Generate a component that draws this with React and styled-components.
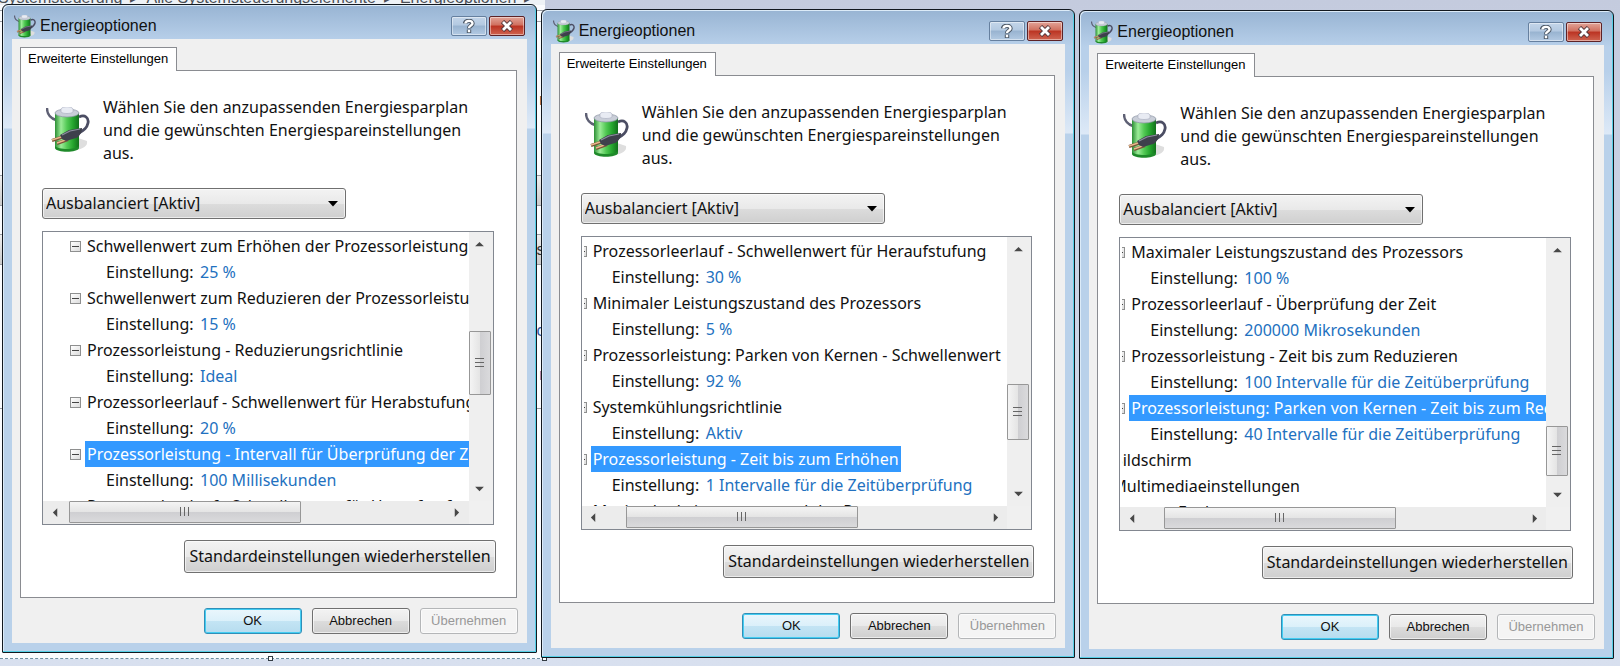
import React, { useId } from "react";
import styled, { createGlobalStyle, css } from "styled-components";

const GlobalStyle = createGlobalStyle`
  *, *::before, *::after { box-sizing: border-box; }
  body { margin: 0; }
`;

const uiFont = `"Noto Sans", "Open Sans", sans-serif`;
const classicFont = `"Liberation Sans", Arial, sans-serif`;

const Desktop = styled.main`
  position: relative;
  min-height: 100vh;
  overflow: hidden;
  padding: 0 6px 7px 2px;
  background: linear-gradient(#c4cbde, #cdd6e8 50%, #d8e0ef);
  font-family: ${uiFont};
  color: #111;
`;

const Windows = styled.div`
  position: relative;
  display: grid;
  grid-template-columns: repeat(3, minmax(0, 1fr));
  align-items: start;
  gap: 4px;
`;

/* Explorer window that shows behind the dialogs */
const Backdrop = styled.div`
  position: absolute;
  left: 0;
  top: 0;
  bottom: 7px;
  width: calc(33.3% + 6px);
  background: #fbfcfe;
  border-bottom: 1px dashed #6f8ea0;
`;

const Breadcrumb = styled.nav`
  display: flex;
  gap: 8px;
  height: 14px;
  margin-top: -9px;
  padding-right: 13px;
  align-items: flex-end;
  justify-content: flex-end;
  font: 16px/14px ${classicFont};
  white-space: nowrap;
  color: #4a4f57;
  background: #eef2f6;
`;

const Sliver = styled.div`
  height: ${(p) => p.$h}px;
  padding-right: 1px;
  text-align: right;
  font: ${(p) => (p.$bold ? "bold" : "normal")} 16px/${(p) => p.$h}px ${classicFont};
  color: ${(p) => p.$color || "#333"};
  background: ${(p) => p.$bg || "transparent"};
  border-bottom: ${(p) => (p.$line ? "1px solid #9a9da3" : "0")};
`;

const Handle = styled.i`
  position: absolute;
  bottom: -3px;
  left: ${(p) => p.$left};
  width: 5px;
  height: 5px;
  border: 1px solid #333c44;
  background: #fff;
`;

const Frame = styled.section`
  margin-top: ${(p) => p.$top}px;
  padding: 0 9px 9px;
  border: 1px solid #12181f;
  border-radius: 6px 6px 1px 1px;
  background: linear-gradient(#98b4d3 0, #b8d0ea 36px, #b8d0ea 60px, #dde9f7 123px, #b9d1ea 124px);
  box-shadow: inset -1px -1px #55cfe6, inset 1px 1px #dcebf8;
`;

const TitleBar = styled.header`
  display: flex;
  align-items: center;
  gap: 2px;
  height: 34px;
  padding: 8px 2px 0;
`;

const Title = styled.h1`
  flex: 1;
  margin: 0 0 0 2px;
  font: normal 16px/20px ${classicFont};
`;

const CaptionButton = styled.button`
  display: grid;
  place-items: center;
  width: 36px;
  height: 20px;
  padding: 0;
  border: 1px solid ${(p) => (p.$close ? "#5d2226" : "#66809f")};
  border-radius: 2px;
  background: ${(p) =>
    p.$close
      ? "linear-gradient(#e2a498, #d0705f 45%, #bb3322 50%, #cf6450)"
      : "linear-gradient(#c3d5e9, #b3c9e1 45%, #98b3d0 50%, #b3cae3)"};
  box-shadow: inset 0 0 0 1px rgba(255, 255, 255, 0.45);
`;

const Client = styled.div`
  display: flex;
  flex-direction: column;
  padding: 8px 9px 9px 8px;
  background: #f0f0f0;
`;

const Tab = styled.button`
  align-self: flex-start;
  position: relative;
  height: 24px;
  margin-bottom: -1px;
  padding: 0 8px 2px 7px;
  border: 1px solid #8a8c91;
  border-bottom: 0;
  background: #fff;
  color: #000;
  font: 13px/20px ${classicFont};
`;

const Panel = styled.div`
  display: flex;
  flex-direction: column;
  margin-right: 1px;
  padding: 25px 22px 24px 21px;
  border: 1px solid #8a8c91;
  background: #fff;
`;

const Intro = styled.div`
  display: flex;
  gap: 13px;
  margin-bottom: 23px;
  padding-left: 4px;
  font-size: 16px;
  line-height: 23px;
`;

const IntroText = styled.p`
  flex: 1;
  max-width: 374px;
  margin: 0;
`;

const IntroIcon = styled.div`
  padding-top: 11px;
  height: 58px;
`;

const PlanPicker = styled.label`
  display: grid;
  align-items: center;
  width: 304px;
  max-width: 100%;
  margin-bottom: 12px;
  > * { grid-area: 1 / 1; }
  > svg { justify-self: end; margin-right: 8px; pointer-events: none; }
`;

const raised = css`
  border: 1px solid #707070;
  border-radius: 3px;
  background: linear-gradient(#f3f3f3, #e9e9e9 50%, #dcdcdc 51%, #cfcfcf);
  box-shadow: inset 0 0 0 1px rgba(255, 255, 255, 0.6);
  color: #111;
`;

const PlanSelect = styled.select`
  ${raised}
  appearance: none;
  width: 100%;
  height: 31px;
  padding: 0 24px 0 3px;
  font: 16px/23px ${uiFont};
`;

const TreeBox = styled.div`
  display: grid;
  grid-template-columns: minmax(0, 1fr) 24px;
  grid-template-rows: 269px 23px;
  margin-bottom: 15px;
  border: 1px solid #828790;
  background: #f0f0f0;
`;

const TreeView = styled.div`
  overflow: hidden;
  padding-top: 1px;
  border-left: 2px solid #fff;
  background: #fff;
`;

const TreeList = styled.ul`
  margin: 0 0 0 ${(p) => -p.$scroll}px;
  padding: 0;
  list-style: none;
`;

const TreeRow = styled.li`
  display: flex;
  align-items: center;
  gap: 4px;
  height: 26px;
  padding-left: ${(p) => (p.$depth ? 27 : 8)}px;
  font-size: 16px;
  line-height: 26px;
  white-space: nowrap;
`;

const TreeLabel = styled.span`
  padding: 0 2px;
  background: ${(p) => (p.$selected ? "#3399ff" : "transparent")};
  color: ${(p) => (p.$selected ? "#fff" : "#111")};
`;

const SettingRow = styled.li`
  display: flex;
  height: 26px;
  padding-left: 63px;
  font-size: 16px;
  line-height: 26px;
  white-space: nowrap;
`;

const SettingName = styled.span`
  min-width: 94px;
`;

const SettingValue = styled.a`
  color: #2271c0;
  text-decoration: none;
`;

const Expander = styled.button`
  display: grid;
  place-items: center;
  flex: none;
  width: 11px;
  height: 11px;
  padding: 0;
  border: 1px solid #8e8f8f;
  background: linear-gradient(135deg, #fff, #dcdcdc);
  &::after {
    content: "";
    width: 7px;
    height: 1px;
    background: #444;
  }
`;

const ScrollTrack = styled.div`
  display: flex;
  flex-direction: ${(p) => (p.$vertical ? "column" : "row")};
  background: ${(p) => (p.$vertical ? "#efefef" : "#ececec")};
  padding: ${(p) => (p.$vertical ? "0 2px 0 0" : "0")};
`;

const ScrollArrow = styled.button`
  display: grid;
  place-items: center;
  width: ${(p) => (p.$vertical ? "auto" : "24px")};
  height: ${(p) => (p.$vertical ? "25px" : "auto")};
  padding: 0;
  border: 0;
  background: none;
`;

const ScrollLane = styled.div`
  flex: 1;
  min-width: 0;
  min-height: 0;
`;

const Thumb = styled.div`
  display: grid;
  place-items: center;
  border: 1px solid #979797;
  border-radius: 1px;
  ${(p) =>
    p.$vertical
      ? css`
          height: ${p.$size}px;
          margin-top: ${p.$at}px;
          background: linear-gradient(90deg, #f4f4f4, #e4e4e4 50%, #cfcfd2 52%, #dadadc);
        `
      : css`
          width: ${p.$size}px;
          max-width: 100%;
          height: 22px;
          margin-left: ${p.$at}px;
          background: linear-gradient(#f4f4f4, #e4e4e4 50%, #cfcfd2 52%, #dadadc);
        `}
`;

const RestoreButton = styled.button`
  ${raised}
  align-self: flex-end;
  height: 33px;
  margin-right: -2px;
  padding: 0 4px;
  font: 16px/23px ${uiFont};
`;

const Footer = styled.footer`
  display: flex;
  justify-content: flex-end;
  gap: 10px;
  margin-top: 10px;
`;

const DialogButton = styled.button`
  ${raised}
  width: 98px;
  height: 26px;
  padding: 0;
  font: 13px/20px ${classicFont};
  ${(p) =>
    p.$primary &&
    css`
      border-color: #2f8fb8;
      background: linear-gradient(#eaf6fc, #dbf0fa 50%, #c3e4f4 51%, #b6dcef);
      box-shadow: inset 0 0 0 1px #43cdf2;
    `}
  &:disabled {
    border-color: #b4b6b8;
    background: #f4f4f4;
    color: #989898;
  }
`;

function BatteryIcon({ width, height }) {
  const id = useId();
  return (
    <svg width={width} height={height} viewBox="0 0 44 46" aria-hidden="true">
      <defs>
        <linearGradient id={id}>
          <stop offset="0" stopColor="#2c8f35" />
          <stop offset="0.25" stopColor="#9cec98" />
          <stop offset="0.5" stopColor="#52c954" />
          <stop offset="0.75" stopColor="#25a52e" />
          <stop offset="1" stopColor="#12701c" />
        </linearGradient>
      </defs>
      <path d="M32 31l9 3c1 5-4 8-12 9z" fill="#dedede" />
      <path d="M1 1c0 6 3 10 9 12" fill="none" stroke="#5e6074" strokeWidth="2.4" />
      <path d="M9 6v34c0 5 24 5 24 0V6z" fill={`url(#${id})`} />
      <path d="M9 39c3 4 21 4 24 0v2c-1 5-23 5-24 0z" fill="#1f8a2a" />
      <ellipse cx="21" cy="6" rx="12" ry="4" fill="#c9ced8" stroke="#8b93a3" strokeWidth="0.7" />
      <path d="M15 5V2c1-3 11-3 12 0v3c-2 2-10 2-12 0z" fill="#e8ebf3" stroke="#a8adbd" strokeWidth="0.6" />
      <path d="M33 10c6-3 10 1 9 6-1 5-4 7-9 10" fill="none" stroke="#4b4d63" strokeWidth="2.8" />
      <path d="M18 29.500L6 33.500M22 32.500l-11 4" stroke="#7b5238" strokeWidth="3" />
      <path d="M18 29L6 33M22 32l-11 4" stroke="#e8b98c" strokeWidth="1.400" />
      <path d="M14 28l9-5 13-2c0 4-2 8-6 10l-10 3-4-2z" fill="#3e404c" />
      <path d="M16 28l8-4 10-2" fill="none" stroke="#8d90a0" strokeWidth="1.200" />
    </svg>
  );
}

const arrows = {
  up: "M0 6L5 1L10 6Z",
  down: "M0 2L5 7L10 2Z",
  left: "M6 0L1 5L6 10Z",
  right: "M2 0L7 5L2 10Z",
};

function Arrow({ dir }) {
  const vertical = dir === "up" || dir === "down";
  return (
    <svg
      width={vertical ? 9 : 7}
      height={vertical ? 7 : 9}
      viewBox={vertical ? "0 0 10 8" : "0 0 8 10"}
      aria-hidden="true"
    >
      <path d={arrows[dir]} fill="#484848" />
    </svg>
  );
}

function Grip({ vertical }) {
  return (
    <svg width="10" height="10" aria-hidden="true">
      <path
        d={vertical ? "M0 .5h9M0 4.500h9M0 8.500h9" : "M.5 0v9M4.500 0v9M8.500 0v9"}
        stroke="#666"
        fill="none"
      />
    </svg>
  );
}

function Scrollbar({ vertical, at, size }) {
  return (
    <ScrollTrack $vertical={vertical}>
      <ScrollArrow type="button" $vertical={vertical} aria-label={vertical ? "Nach oben" : "Nach links"}>
        <Arrow dir={vertical ? "up" : "left"} />
      </ScrollArrow>
      <ScrollLane>
        <Thumb $vertical={vertical} $at={at} $size={size}>
          <Grip vertical={vertical} />
        </Thumb>
      </ScrollLane>
      <ScrollArrow type="button" $vertical={vertical} aria-label={vertical ? "Nach unten" : "Nach rechts"}>
        <Arrow dir={vertical ? "down" : "right"} />
      </ScrollArrow>
    </ScrollTrack>
  );
}

function TreeItem({ item }) {
  return (
    <>
      <TreeRow $depth={item.root ? 0 : 1}>
        <Expander type="button" aria-label="Reduzieren" />
        <TreeLabel $selected={item.selected}>{item.name}</TreeLabel>
      </TreeRow>
      {item.value && (
        <SettingRow>
          <SettingName>Einstellung:</SettingName>
          <SettingValue href="#">{item.value}</SettingValue>
        </SettingRow>
      )}
    </>
  );
}

function PowerDialog({ top, scroll, items, vThumb, hThumb }) {
  return (
    <Frame $top={top}>
      <TitleBar>
        <BatteryIcon width={22} height={23} />
        <Title>Energieoptionen</Title>
        <CaptionButton type="button" aria-label="Hilfe">
          <svg width="12" height="14" viewBox="0 0 12 14" fill="none" aria-hidden="true">
            <path d="M2 4.500C2.500 1 9.500 1 9.500 4.500 9.500 6.500 6 6.500 6 9.500M6 10.500v3.500" stroke="#4d5866" strokeWidth="4.400" />
            <path d="M2.500 4.500C2.500 1 9.500 1 9.500 4.500 9.500 6.500 6 6.500 6 9M6 10.800v2.400" stroke="#fff" strokeWidth="2.400" />
          </svg>
        </CaptionButton>
        <CaptionButton type="button" $close aria-label="Schließen">
          <svg width="14" height="12" viewBox="0 0 14 12" fill="none" aria-hidden="true">
            <path d="M2.500 1.500l9 9M11.500 1.500l-9 9" stroke="#54383c" strokeWidth="4.600" />
            <path d="M3 2l8 8M11 2l-8 8" stroke="#fff" strokeWidth="2.800" />
          </svg>
        </CaptionButton>
      </TitleBar>
      <Client>
        <Tab type="button">Erweiterte Einstellungen</Tab>
        <Panel>
          <Intro>
            <IntroIcon>
              <BatteryIcon width={44} height={46} />
            </IntroIcon>
            <IntroText>
              Wählen Sie den anzupassenden Energiesparplan und die gewünschten Energiespareinstellungen aus.
            </IntroText>
          </Intro>
          <PlanPicker>
            <PlanSelect aria-label="Energiesparplan">
              <option>Ausbalanciert [Aktiv]</option>
            </PlanSelect>
            <svg width="10" height="6" aria-hidden="true">
              <path d="M0 0h10L5 5.500z" fill="#000" />
            </svg>
          </PlanPicker>
          <TreeBox>
            <TreeView>
              <TreeList $scroll={scroll}>
                {items.map((item) => (
                  <TreeItem key={item.name} item={item} />
                ))}
              </TreeList>
            </TreeView>
            <Scrollbar vertical at={vThumb.at} size={vThumb.size} />
            <Scrollbar at={hThumb.at} size={hThumb.size} />
          </TreeBox>
          <RestoreButton type="button">Standardeinstellungen wiederherstellen</RestoreButton>
        </Panel>
        <Footer>
          <DialogButton type="button" $primary>OK</DialogButton>
          <DialogButton type="button">Abbrechen</DialogButton>
          <DialogButton type="button" disabled>Übernehmen</DialogButton>
        </Footer>
      </Client>
    </Frame>
  );
}

const dialogs = [
  {
    top: 4,
    scroll: 2,
    vThumb: { at: 74, size: 64 },
    hThumb: { at: 2, size: 232 },
    items: [
      { name: "Schwellenwert zum Erhöhen der Prozessorleistung", value: "25 %" },
      { name: "Schwellenwert zum Reduzieren der Prozessorleistung", value: "15 %" },
      { name: "Prozessorleistung - Reduzierungsrichtlinie", value: "Ideal" },
      { name: "Prozessorleerlauf - Schwellenwert für Herabstufung", value: "20 %" },
      { name: "Prozessorleistung - Intervall für Überprüfung der Zeit", value: "100 Millisekunden", selected: true },
      { name: "Prozessorleerlauf - Schwellenwert für Heraufstufung" },
    ],
  },
  {
    top: 9,
    scroll: 35,
    vThumb: { at: 122, size: 56 },
    hThumb: { at: 20, size: 232 },
    items: [
      { name: "Prozessorleerlauf - Schwellenwert für Heraufstufung", value: "30 %" },
      { name: "Minimaler Leistungszustand des Prozessors", value: "5 %" },
      { name: "Prozessorleistung: Parken von Kernen - Schwellenwert", value: "92 %" },
      { name: "Systemkühlungsrichtlinie", value: "Aktiv" },
      { name: "Prozessorleistung - Zeit bis zum Erhöhen", value: "1 Intervalle für die Zeitüberprüfung", selected: true },
      { name: "Maximaler Leistungszustand des Prozessors" },
    ],
  },
  {
    top: 10,
    scroll: 35,
    vThumb: { at: 163, size: 50 },
    hThumb: { at: 20, size: 232 },
    items: [
      { name: "Maximaler Leistungszustand des Prozessors", value: "100 %" },
      { name: "Prozessorleerlauf - Überprüfung der Zeit", value: "200000 Mikrosekunden" },
      { name: "Prozessorleistung - Zeit bis zum Reduzieren", value: "100 Intervalle für die Zeitüberprüfung" },
      { name: "Prozessorleistung: Parken von Kernen - Zeit bis zum Reduzieren", value: "40 Intervalle für die Zeitüberprüfung", selected: true },
      { name: "Bildschirm", root: true },
      { name: "Multimediaeinstellungen", root: true },
      { name: "Internet Explorer", root: true },
    ],
  },
];

export default function App() {
  return (
    <Desktop>
      <GlobalStyle />
      <Backdrop>
        <Breadcrumb>
          <span>Systemsteuerung</span>
          <span>▸</span>
          <span>Alle Systemsteuerungselemente</span>
          <span>▸</span>
          <span>Energieoptionen</span>
          <span>▸</span>
        </Breadcrumb>
        <Sliver $h={6} $line />
        <Sliver $h={11} $line />
        <Sliver $h={32} />
        <Sliver $h={22} $bold $color="#1c2a6b">l</Sliver>
        <Sliver $h={12} />
        <Sliver $h={24}>r</Sliver>
        <Sliver $h={64} $line />
        <Sliver $h={30} $bg="linear-gradient(#eeeeee, #cccccc)" $line />
        <Sliver $h={29} $line />
        <Sliver $h={30} $bg="linear-gradient(#eeeeee, #cccccc)" $line>s</Sliver>
        <Sliver $h={54} />
        <Sliver $h={24} $color="#2f55a0">c</Sliver>
        <Sliver $h={20} />
        <Sliver $h={24} $color="#2f55a0">r</Sliver>
        <Sliver $h={22} $line />
        <Handle $left="calc(50% - 5px)" />
        <Handle $left="calc(100% - 3px)" />
      </Backdrop>
      <Windows>
        {dialogs.map((dialog) => (
          <PowerDialog key={dialog.top} {...dialog} />
        ))}
      </Windows>
    </Desktop>
  );
}
